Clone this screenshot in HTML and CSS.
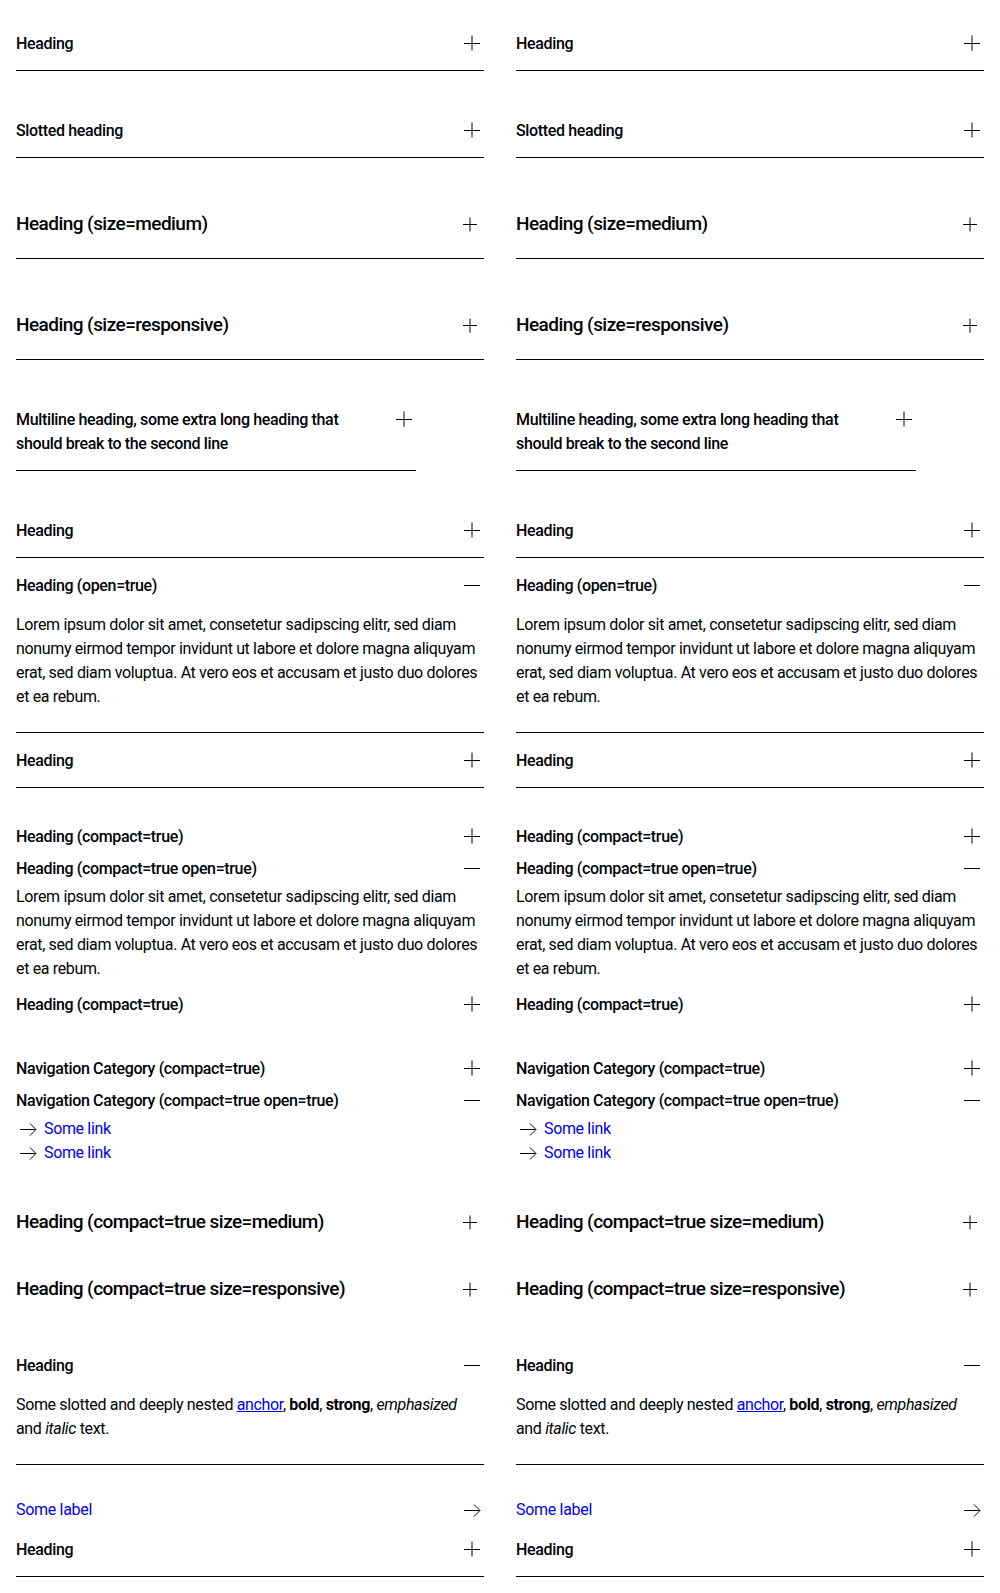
FILE: index.html
```
<!DOCTYPE html>
<html lang="en">
<head>
<meta charset="utf-8">
<title>Accordion</title>
<link rel="stylesheet" href="styles.css">
</head>
<body>
<div class="page">
  <div class="col">
    <div class="group">
      <div class="acc"><div class="head"><span class="title">Heading</span><span class="ibox"><svg class="icon" viewBox="0 0 24 24"><path d="M4 12.5h16M12 4.5v15"/></svg></span></div></div>
    </div>
    <div class="group">
      <div class="acc"><div class="head"><span class="title">Slotted heading</span><span class="ibox"><svg class="icon" viewBox="0 0 24 24"><path d="M4 12.5h16M12 4.5v15"/></svg></span></div></div>
    </div>
    <div class="group">
      <div class="acc medium"><div class="head"><span class="title">Heading (size=medium)</span><span class="ibox"><svg class="icon" viewBox="0 0 24 24"><path d="M5 12.5h14M12 5.5v14"/></svg></span></div></div>
    </div>
    <div class="group">
      <div class="acc medium"><div class="head"><span class="title">Heading (size=responsive)</span><span class="ibox"><svg class="icon" viewBox="0 0 24 24"><path d="M5 12.5h14M12 5.5v14"/></svg></span></div></div>
    </div>
    <div class="group narrow">
      <div class="acc"><div class="head"><span class="title">Multiline heading, some extra long heading that should break to the second line</span><span class="ibox"><svg class="icon" viewBox="0 0 24 24"><path d="M4 12.5h16M12 4.5v15"/></svg></span></div></div>
    </div>
    <div class="group">
      <div class="acc"><div class="head"><span class="title">Heading</span><span class="ibox"><svg class="icon" viewBox="0 0 24 24"><path d="M4 12.5h16M12 4.5v15"/></svg></span></div></div>
      <div class="acc open"><div class="head"><span class="title">Heading (open=true)</span><span class="ibox"><svg class="icon" viewBox="0 0 24 24"><path d="M4 12.5h16"/></svg></span></div>
        <div class="body">Lorem ipsum dolor sit amet, consetetur sadipscing elitr, sed diam nonumy eirmod tempor invidunt ut labore et dolore magna aliquyam erat, sed diam voluptua. At vero eos et accusam et justo duo dolores et ea rebum.</div></div>
      <div class="acc"><div class="head"><span class="title">Heading</span><span class="ibox"><svg class="icon" viewBox="0 0 24 24"><path d="M4 12.5h16M12 4.5v15"/></svg></span></div></div>
    </div>
    <div class="group">
      <div class="acc compact"><div class="head"><span class="title">Heading (compact=true)</span><span class="ibox"><svg class="icon" viewBox="0 0 24 24"><path d="M4 12.5h16M12 4.5v15"/></svg></span></div></div>
      <div class="acc compact open"><div class="head"><span class="title">Heading (compact=true open=true)</span><span class="ibox"><svg class="icon" viewBox="0 0 24 24"><path d="M4 12.5h16"/></svg></span></div>
        <div class="body">Lorem ipsum dolor sit amet, consetetur sadipscing elitr, sed diam nonumy eirmod tempor invidunt ut labore et dolore magna aliquyam erat, sed diam voluptua. At vero eos et accusam et justo duo dolores et ea rebum.</div></div>
      <div class="acc compact"><div class="head"><span class="title">Heading (compact=true)</span><span class="ibox"><svg class="icon" viewBox="0 0 24 24"><path d="M4 12.5h16M12 4.5v15"/></svg></span></div></div>
    </div>
    <div class="group">
      <div class="acc compact"><div class="head"><span class="title">Navigation Category (compact=true)</span><span class="ibox"><svg class="icon" viewBox="0 0 24 24"><path d="M4 12.5h16M12 4.5v15"/></svg></span></div></div>
      <div class="acc compact open"><div class="head"><span class="title">Navigation Category (compact=true open=true)</span><span class="ibox"><svg class="icon" viewBox="0 0 24 24"><path d="M4 12.5h16"/></svg></span></div>
        <div class="body">
          <a class="navlink" href="#"><svg class="icon" viewBox="0 0 24 24"><path d="M4 12.5h15.5M14 6.5l6 6-6 6"/></svg><span>Some link</span></a>
          <a class="navlink" href="#"><svg class="icon" viewBox="0 0 24 24"><path d="M4 12.5h15.5M14 6.5l6 6-6 6"/></svg><span>Some link</span></a>
        </div></div>
    </div>
    <div class="group">
      <div class="acc compact medium"><div class="head"><span class="title">Heading (compact=true size=medium)</span><span class="ibox"><svg class="icon" viewBox="0 0 24 24"><path d="M5 12.5h14M12 5.5v14"/></svg></span></div></div>
    </div>
    <div class="group">
      <div class="acc compact medium"><div class="head"><span class="title">Heading (compact=true size=responsive)</span><span class="ibox"><svg class="icon" viewBox="0 0 24 24"><path d="M5 12.5h14M12 5.5v14"/></svg></span></div></div>
    </div>
    <div class="group">
      <div class="acc open"><div class="head"><span class="title">Heading</span><span class="ibox"><svg class="icon" viewBox="0 0 24 24"><path d="M4 12.5h16"/></svg></span></div>
        <div class="body rich">Some slotted and deeply nested <a href="#">anchor</a>, <b>bold</b>, <strong>strong</strong>, <em>emphasized</em> and <i>italic</i> text.</div></div>
    </div>
    <div class="group">
      <a class="label-link" href="#"><span>Some label</span><svg class="icon" viewBox="0 0 24 24"><path d="M4 12.5h15.5M14 6.5l6 6-6 6"/></svg></a>
      <div class="acc"><div class="head"><span class="title">Heading</span><span class="ibox"><svg class="icon" viewBox="0 0 24 24"><path d="M4 12.5h16M12 4.5v15"/></svg></span></div></div>
    </div>
  </div>

  <div class="col">
    <div class="group">
      <div class="acc"><div class="head"><span class="title">Heading</span><span class="ibox"><svg class="icon" viewBox="0 0 24 24"><path d="M4 12.5h16M12 4.5v15"/></svg></span></div></div>
    </div>
    <div class="group">
      <div class="acc"><div class="head"><span class="title">Slotted heading</span><span class="ibox"><svg class="icon" viewBox="0 0 24 24"><path d="M4 12.5h16M12 4.5v15"/></svg></span></div></div>
    </div>
    <div class="group">
      <div class="acc medium"><div class="head"><span class="title">Heading (size=medium)</span><span class="ibox"><svg class="icon" viewBox="0 0 24 24"><path d="M5 12.5h14M12 5.5v14"/></svg></span></div></div>
    </div>
    <div class="group">
      <div class="acc medium"><div class="head"><span class="title">Heading (size=responsive)</span><span class="ibox"><svg class="icon" viewBox="0 0 24 24"><path d="M5 12.5h14M12 5.5v14"/></svg></span></div></div>
    </div>
    <div class="group narrow">
      <div class="acc"><div class="head"><span class="title">Multiline heading, some extra long heading that should break to the second line</span><span class="ibox"><svg class="icon" viewBox="0 0 24 24"><path d="M4 12.5h16M12 4.5v15"/></svg></span></div></div>
    </div>
    <div class="group">
      <div class="acc"><div class="head"><span class="title">Heading</span><span class="ibox"><svg class="icon" viewBox="0 0 24 24"><path d="M4 12.5h16M12 4.5v15"/></svg></span></div></div>
      <div class="acc open"><div class="head"><span class="title">Heading (open=true)</span><span class="ibox"><svg class="icon" viewBox="0 0 24 24"><path d="M4 12.5h16"/></svg></span></div>
        <div class="body">Lorem ipsum dolor sit amet, consetetur sadipscing elitr, sed diam nonumy eirmod tempor invidunt ut labore et dolore magna aliquyam erat, sed diam voluptua. At vero eos et accusam et justo duo dolores et ea rebum.</div></div>
      <div class="acc"><div class="head"><span class="title">Heading</span><span class="ibox"><svg class="icon" viewBox="0 0 24 24"><path d="M4 12.5h16M12 4.5v15"/></svg></span></div></div>
    </div>
    <div class="group">
      <div class="acc compact"><div class="head"><span class="title">Heading (compact=true)</span><span class="ibox"><svg class="icon" viewBox="0 0 24 24"><path d="M4 12.5h16M12 4.5v15"/></svg></span></div></div>
      <div class="acc compact open"><div class="head"><span class="title">Heading (compact=true open=true)</span><span class="ibox"><svg class="icon" viewBox="0 0 24 24"><path d="M4 12.5h16"/></svg></span></div>
        <div class="body">Lorem ipsum dolor sit amet, consetetur sadipscing elitr, sed diam nonumy eirmod tempor invidunt ut labore et dolore magna aliquyam erat, sed diam voluptua. At vero eos et accusam et justo duo dolores et ea rebum.</div></div>
      <div class="acc compact"><div class="head"><span class="title">Heading (compact=true)</span><span class="ibox"><svg class="icon" viewBox="0 0 24 24"><path d="M4 12.5h16M12 4.5v15"/></svg></span></div></div>
    </div>
    <div class="group">
      <div class="acc compact"><div class="head"><span class="title">Navigation Category (compact=true)</span><span class="ibox"><svg class="icon" viewBox="0 0 24 24"><path d="M4 12.5h16M12 4.5v15"/></svg></span></div></div>
      <div class="acc compact open"><div class="head"><span class="title">Navigation Category (compact=true open=true)</span><span class="ibox"><svg class="icon" viewBox="0 0 24 24"><path d="M4 12.5h16"/></svg></span></div>
        <div class="body">
          <a class="navlink" href="#"><svg class="icon" viewBox="0 0 24 24"><path d="M4 12.5h15.5M14 6.5l6 6-6 6"/></svg><span>Some link</span></a>
          <a class="navlink" href="#"><svg class="icon" viewBox="0 0 24 24"><path d="M4 12.5h15.5M14 6.5l6 6-6 6"/></svg><span>Some link</span></a>
        </div></div>
    </div>
    <div class="group">
      <div class="acc compact medium"><div class="head"><span class="title">Heading (compact=true size=medium)</span><span class="ibox"><svg class="icon" viewBox="0 0 24 24"><path d="M5 12.5h14M12 5.5v14"/></svg></span></div></div>
    </div>
    <div class="group">
      <div class="acc compact medium"><div class="head"><span class="title">Heading (compact=true size=responsive)</span><span class="ibox"><svg class="icon" viewBox="0 0 24 24"><path d="M5 12.5h14M12 5.5v14"/></svg></span></div></div>
    </div>
    <div class="group">
      <div class="acc open"><div class="head"><span class="title">Heading</span><span class="ibox"><svg class="icon" viewBox="0 0 24 24"><path d="M4 12.5h16"/></svg></span></div>
        <div class="body rich">Some slotted and deeply nested <a href="#">anchor</a>, <b>bold</b>, <strong>strong</strong>, <em>emphasized</em> and <i>italic</i> text.</div></div>
    </div>
    <div class="group">
      <a class="label-link" href="#"><span>Some label</span><svg class="icon" viewBox="0 0 24 24"><path d="M4 12.5h15.5M14 6.5l6 6-6 6"/></svg></a>
      <div class="acc"><div class="head"><span class="title">Heading</span><span class="ibox"><svg class="icon" viewBox="0 0 24 24"><path d="M4 12.5h16M12 4.5v15"/></svg></span></div></div>
    </div>
  </div>
</div>
</body>
</html>
```

FILE: styles.css
```
* { box-sizing: border-box; }
html, body { margin: 0; padding: 0; background: #fff; }
body {
  font-family: Roboto, "Liberation Sans", Arial, sans-serif;
  color: #010205;
  font-size: 16px;
  line-height: 24px;
}
.page {
  display: grid;
  grid-template-columns: 1fr 1fr;
  column-gap: 32px;
  padding: 16px;
}
.col {
  display: flex;
  flex-direction: column;
  gap: 32px;
  min-width: 0;
}
.group {
  display: flex;
  flex-direction: column;
}
.group.narrow { max-width: 400px; }
.acc { border-bottom: 1px solid #010205; }
.acc.compact { border-bottom: 0; }
.head {
  display: flex;
  justify-content: space-between;
  align-items: flex-start;
  gap: 24px;
  padding: 15px 0;
  font-size: 16px;
  line-height: 24px;
  font-weight: 500;
  letter-spacing: -0.35px;
}
.title {
  padding-top: 1px;
  margin-bottom: -1px;
}
.acc.medium .head {
  font-size: 19px;
  line-height: 27px;
  padding: 20px 0 21px;
  letter-spacing: -0.55px;
}
.acc.medium .title {
  padding-top: 0;
  margin-bottom: 0;
}
.acc.compact .head { padding: 4px 0; }
.ibox {
  flex: none;
  display: flex;
  align-items: center;
  height: 24px;
}
.acc.medium .ibox { height: 27px; margin-right: 2px; }
.icon {
  width: 24px;
  height: 24px;
  flex: none;
  fill: none;
  stroke: #010205;
  stroke-width: 1;
}
.body {
  padding: 1px 0 23px;
  font-size: 16px;
  line-height: 24px;
  font-weight: 400;
  letter-spacing: -0.35px;
}
.acc.compact .body { padding: 1px 0 7px; }
.body a { color: #0000ee; }
.navlink {
  display: flex;
  align-items: center;
  gap: 4px;
  color: #0000ee;
  text-decoration: none;
  height: 24px;
}
.label-link {
  display: flex;
  justify-content: space-between;
  align-items: center;
  height: 25px;
  padding-top: 1px;
  color: #0000ee;
  text-decoration: none;
  letter-spacing: -0.3px;
}
.rich b, .rich strong { font-weight: 700; }
```
